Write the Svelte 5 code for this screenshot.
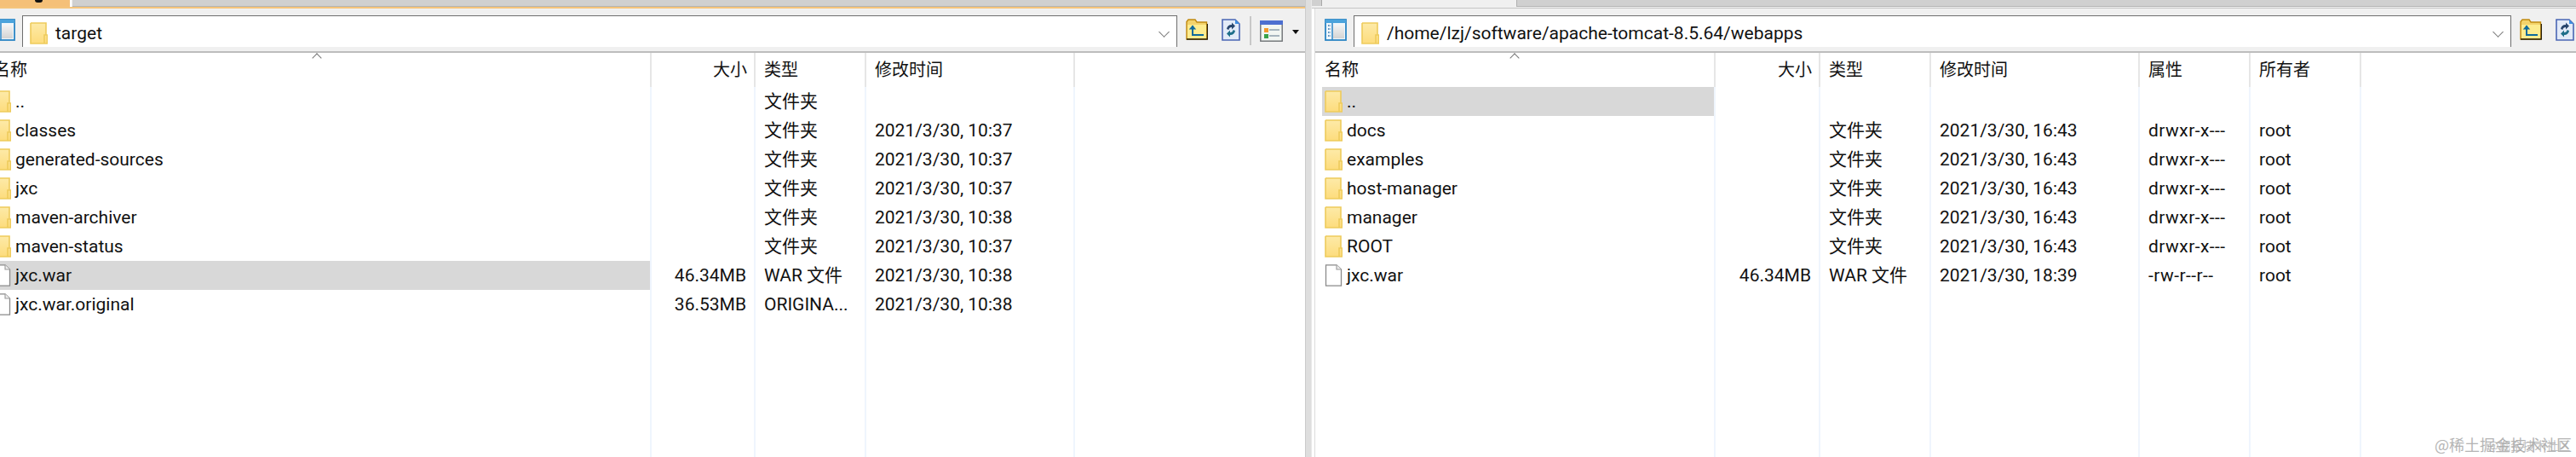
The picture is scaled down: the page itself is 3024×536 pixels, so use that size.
<script>
  const leftCols = [
    { key: 'name', title: '名称', w: 784 },
    { key: 'size', title: '大小', w: 122, right: true },
    { key: 'type', title: '类型', w: 130 },
    { key: 'time', title: '修改时间', w: 245 }
  ];
  const rightCols = [
    { key: 'name', title: '名称', w: 470 },
    { key: 'size', title: '大小', w: 123, right: true },
    { key: 'type', title: '类型', w: 130 },
    { key: 'time', title: '修改时间', w: 245 },
    { key: 'attr', title: '属性', w: 130 },
    { key: 'owner', title: '所有者', w: 130 }
  ];
  const leftRows = [
    { name: '..', kind: 'd', type: '文件夹' },
    { name: 'classes', kind: 'd', type: '文件夹', time: '2021/3/30, 10:37' },
    { name: 'generated-sources', kind: 'd', type: '文件夹', time: '2021/3/30, 10:37' },
    { name: 'jxc', kind: 'd', type: '文件夹', time: '2021/3/30, 10:37' },
    { name: 'maven-archiver', kind: 'd', type: '文件夹', time: '2021/3/30, 10:38' },
    { name: 'maven-status', kind: 'd', type: '文件夹', time: '2021/3/30, 10:37' },
    { name: 'jxc.war', kind: 'f', sel: true, size: '46.34MB', type: 'WAR 文件', time: '2021/3/30, 10:38' },
    { name: 'jxc.war.original', kind: 'f', size: '36.53MB', type: 'ORIGINA...', time: '2021/3/30, 10:38' }
  ];
  const dirTime = '2021/3/30, 16:43';
  const rightRows = [
    { name: '..', kind: 'd', sel: true },
    { name: 'docs', kind: 'd', type: '文件夹', time: dirTime, attr: 'drwxr-x---', owner: 'root' },
    { name: 'examples', kind: 'd', type: '文件夹', time: dirTime, attr: 'drwxr-x---', owner: 'root' },
    { name: 'host-manager', kind: 'd', type: '文件夹', time: dirTime, attr: 'drwxr-x---', owner: 'root' },
    { name: 'manager', kind: 'd', type: '文件夹', time: dirTime, attr: 'drwxr-x---', owner: 'root' },
    { name: 'ROOT', kind: 'd', type: '文件夹', time: dirTime, attr: 'drwxr-x---', owner: 'root' },
    { name: 'jxc.war', kind: 'f', size: '46.34MB', type: 'WAR 文件', time: '2021/3/30, 18:39', attr: '-rw-r--r--', owner: 'root' }
  ];
</script>

{#snippet folderIcon()}
  <svg class="ico" width="21" height="26" viewBox="0 0 21 26">
    <defs>
      <linearGradient id="fg" x1="0" y1="0" x2="0" y2="1">
        <stop offset="0" stop-color="#fdeaa8" />
        <stop offset="1" stop-color="#fddc7c" />
      </linearGradient>
    </defs>
    <path d="M1 1H19V15H21V25H1Z" fill="url(#fg)" />
    <path d="M1 1H19V15M1 1V25H20.5V15H17V25" fill="none" stroke="#eecb5c" stroke-width="1.6" />
  </svg>
{/snippet}

{#snippet fileIcon()}
  <svg class="ico" width="21" height="26" viewBox="0 0 21 26">
    <path d="M1.5 .8H14L19.5 6V25.2H1.5Z" fill="#fff" stroke="#8a8a8a" stroke-width="1.3" />
    <path d="M14 .8V6H19.5" fill="#eee" stroke="#9a9a9a" stroke-width="1.1" />
  </svg>
{/snippet}

{#snippet panelIcon()}
  <svg class="panel" width="26" height="26" viewBox="0 0 26 26">
    <defs>
      <linearGradient id="pg" x1="0" y1="0" x2="0" y2="1">
        <stop offset="0" stop-color="#f4f4f4" />
        <stop offset="1" stop-color="#d4d4d4" />
      </linearGradient>
    </defs>
    <rect x="1" y="1" width="24" height="24" fill="#eef6fc" stroke="#2c85c4" stroke-width="1.8" />
    <rect x="1" y="1" width="24" height="4" fill="#4ba3dc" />
    <rect x="10" y="7" width="13" height="16" fill="url(#pg)" />
    <path d="M9 5V25" stroke="#2c85c4" stroke-width="1.5" />
    <path d="M4 8h3M4 12h3M4 16h3M4 20h3" stroke="#2a6ea8" stroke-width="1.5" stroke-dasharray="1.5 1" />
  </svg>
{/snippet}

{#snippet upIcon()}
  <svg class="tool" width="26" height="25" viewBox="0 0 26 25">
    <path d="M1 3.5L3 1H11L13 4H24.5V24H1Z" fill="#f3d36b" stroke="#c08a12" stroke-width="1.4" />
    <path d="M2 7H24V23H2Z" fill="#fdec8f" />
    <path d="M1 24H25.5V6" fill="none" stroke="#2a2410" stroke-width="1.5" />
    <path d="M8 8V19H21" fill="none" stroke="#0e6a9c" stroke-width="2" />
    <path d="M3.8 12.5L8 7.5L12.2 12.5Z" fill="#0e6a9c" />
  </svg>
{/snippet}

{#snippet refreshIcon()}
  <svg class="tool" width="22" height="26" viewBox="0 0 22 26">
    <path d="M1 1H16L21 6V25H1Z" fill="#e3ebf8" stroke="#4a66b4" stroke-width="1.6" />
    <path d="M16 1V6H21Z" fill="#3f8fe0" />
    <path d="M6 12A5.5 5.5 0 0 1 12 7V4.5L16 8.5L12 12.5V10A3 3 0 0 0 8.5 13Z" fill="#28466e" />
    <path d="M16 14A5.5 5.5 0 0 1 10 19V21.5L6 17.5L10 13.5V16A3 3 0 0 0 13.5 13Z" fill="#1f6f8a" />
  </svg>
{/snippet}

{#snippet listIcon()}
  <svg class="tool" width="27" height="25" viewBox="0 0 27 25">
    <rect x=".8" y=".8" width="25.4" height="23.4" fill="#f2f6f2" stroke="#6d7074" stroke-width="1.4" />
    <rect x="0" y="0" width="27" height="5" fill="#4c6fd0" />
    <rect x="5" y="9" width="5" height="5" fill="#f59a2c" />
    <rect x="5" y="16" width="5" height="5" fill="#3aa24a" />
    <path d="M11 11H23M11 18H23" stroke="#8da0ac" stroke-width="1.6" />
  </svg>
{/snippet}

{#snippet columns(cols, rows)}
  <div class="cols">
    {#each cols as col}
      <div class="col" class:col-right={col.right} style="width:{col.w}px">
        <div class="head">{col.title}</div>
        {#if col.key === 'name'}<span class="sort"></span>{/if}
        {#each rows as row}
          {#if col.key === 'name'}
            <div class="row name" class:sel={row.sel}>
              {#if row.kind === 'd'}{@render folderIcon()}{:else}{@render fileIcon()}{/if}
              <span>{row.name}</span>
            </div>
          {:else}
            <div class="row" class:attr={col.key === 'attr'}>{row[col.key] ?? ''}</div>
          {/if}
        {/each}
      </div>
    {/each}
  </div>
{/snippet}

<div class="app">
  <section class="pane left">
    <div class="strip">
      <div class="tab"><i></i></div>
      <div class="rest"></div>
    </div>
    <div class="toolbar">
      {@render panelIcon()}
      <div class="addr">
        {@render folderIcon()}
        <span>target</span>
        <b class="chev"></b>
      </div>
      <div class="tools tools-left">
        {@render upIcon()}
        {@render refreshIcon()}
        <span class="sep"></span>
        {@render listIcon()}
        <span class="tri"></span>
      </div>
    </div>
    {@render columns(leftCols, leftRows)}
  </section>

  <div class="gutter"></div>

  <section class="pane right">
    <div class="strip">
      <div class="seg-a"></div>
      <div class="seg-b"></div>
      <div class="rest"></div>
    </div>
    <div class="body">
      <div class="toolbar">
        {@render panelIcon()}
        <div class="addr">
          {@render folderIcon()}
          <span>/home/lzj/software/apache-tomcat-8.5.64/webapps</span>
          <b class="chev"></b>
        </div>
        <div class="tools tools-right">
          {@render upIcon()}
          {@render refreshIcon()}
        </div>
      </div>
      {@render columns(rightCols, rightRows)}
    </div>
  </section>

  <div class="mark">@稀土掘金技术社区</div>
  <div class="mark mark2">@掘金技术社区</div>
</div>

<style>
  :global(body) {
    margin: 0;
    background: #fff;
  }
  .app {
    display: flex;
    position: relative;
    width: 3024px;
    height: 536px;
    overflow: hidden;
    font-family: Roboto, "Noto Sans CJK SC", sans-serif;
    font-size: 21px;
    color: #111;
  }
  .pane {
    display: flex;
    flex-direction: column;
    height: 536px;
    flex: none;
  }
  .left {
    width: 1551px;
    margin-left: -19px;
  }
  .right {
    width: 1484px;
  }
  .body {
    display: flex;
    flex-direction: column;
    flex: 1;
    margin-left: 4px;
    box-shadow: -1px 0 0 #dcdcdc;
  }
  .gutter {
    flex: none;
    width: 8px;
    height: 536px;
    box-sizing: border-box;
    background: #dedede;
    border-left: 1px solid #cbcbcb;
    border-right: 1px solid #e8e8e8;
  }
  .strip {
    display: flex;
    height: 10px;
    flex: none;
    box-sizing: border-box;
  }
  .left .strip {
    border-bottom: 2px solid #f5c47c;
    background: #f0f0f0;
  }
  .right .strip {
    border-bottom: 1px solid #c6c6c6;
    padding-bottom: 1px;
    background: #f0f0f0;
  }
  .tab {
    width: 101px;
    background: #f5c078;
    border-right: 2px solid #fff;
    position: relative;
  }
  .tab i {
    position: absolute;
    left: 60px;
    top: 0;
    width: 9px;
    height: 3px;
    background: #111;
    border-radius: 0 0 4px 4px;
  }
  .rest {
    flex: 1;
    background: #d0d0d0;
    border-bottom: 1px solid #b4b4b4;
    height: 7px;
  }
  .left .rest {
    margin-left: 1px;
  }
  .seg-a {
    width: 11px;
    height: 7px;
    background: #d0d0d0;
    border-right: 1px solid #a8a8a8;
  }
  .seg-b {
    width: 228px;
    height: 8px;
    background: #f0f0f0;
    border-right: 1px solid #b0b0b0;
  }
  .toolbar {
    display: flex;
    flex: none;
    height: 52px;
    box-sizing: border-box;
    padding-top: 8px;
    background: #f0f0f0;
    border-bottom: 2px solid #bdbdbd;
  }
  .panel {
    flex: none;
    margin: 4px 8px 0 11px;
  }
  .addr {
    flex: 1;
    min-width: 0;
    height: 37px;
    box-sizing: border-box;
    display: flex;
    align-items: flex-start;
    gap: 9px;
    padding: 7px 0 0 8px;
    background: #fff;
    border: 1px solid #6e6e6e;
    border-bottom: 0;
    border-right-width: 1.5px;
    border-left-width: 1.5px;
    position: relative;
    line-height: 24px;
  }
  .addr span {
    margin-top: 1px;
  }
  .chev {
    position: absolute;
    right: 10px;
    top: 14px;
    width: 8px;
    height: 8px;
    transform: rotate(45deg);
    border-right: 1.5px solid #777;
    border-bottom: 1.5px solid #777;
  }
  .tools {
    flex: none;
    display: flex;
    box-sizing: border-box;
    padding: 4px 0 0 10px;
    overflow: hidden;
  }
  .tools-left {
    width: 150px;
  }
  .tools-right {
    width: 76px;
  }
  .tool {
    flex: none;
    margin-right: 16px;
  }
  .tools .tool:nth-child(2) {
    margin-right: 11px;
  }
  .sep {
    flex: none;
    width: 2px;
    height: 34px;
    margin: -3px 10px 0 0;
    background: #c8c8c8;
  }
  .tools .tool:nth-child(4) {
    margin: 2px 11px 0 0;
  }
  .tri {
    flex: none;
    width: 0;
    height: 0;
    margin-top: 13px;
    border: 4px solid transparent;
    border-top: 5px solid #111;
    border-bottom: 0;
  }
  .cols {
    display: flex;
    flex: 1;
  }
  .col {
    position: relative;
    flex: none;
    box-sizing: border-box;
    height: 474px;
    border-right: 2px solid #eff5fd;
  }
  .head {
    height: 40px;
    box-sizing: border-box;
    margin-right: -2px;
    padding: 0 10px;
    border-right: 2px solid #e6e6e6;
    line-height: 38px;
    font-size: 20px;
    font-family: "Noto Sans CJK SC", sans-serif;
  }
  .col:first-child .head {
    padding-left: 11px;
  }
  .sort {
    position: absolute;
    left: 50%;
    top: 2px;
    width: 7px;
    height: 7px;
    margin-left: -4px;
    transform: rotate(45deg);
    border-left: 1px solid #777;
    border-top: 1px solid #777;
  }
  .row {
    height: 34px;
    padding: 0 10px;
    line-height: 34px;
    white-space: nowrap;
  }
  .attr {
    letter-spacing: .45px;
  }
  .col-right .row {
    text-align: right;
    padding-right: 9px;
  }
  .col-right .head {
    text-align: right;
    padding-right: 8px;
  }
  .name {
    display: flex;
    align-items: center;
    gap: 5px;
    margin: 0 0 0 8px;
    padding: 0 0 0 3px;
  }
  .ico {
    flex: none;
  }
  .sel {
    background: #d8d8d8;
  }
  .mark {
    position: absolute;
    left: 2858px;
    top: 509px;
    font-family: "Noto Sans CJK SC", sans-serif;
    font-size: 18px;
    line-height: 24px;
    color: #a8a8a8;
    white-space: nowrap;
    opacity: .85;
  }
  .mark2 {
    left: 2920px;
    top: 510px;
    font-size: 14px;
    opacity: .7;
  }
</style>
